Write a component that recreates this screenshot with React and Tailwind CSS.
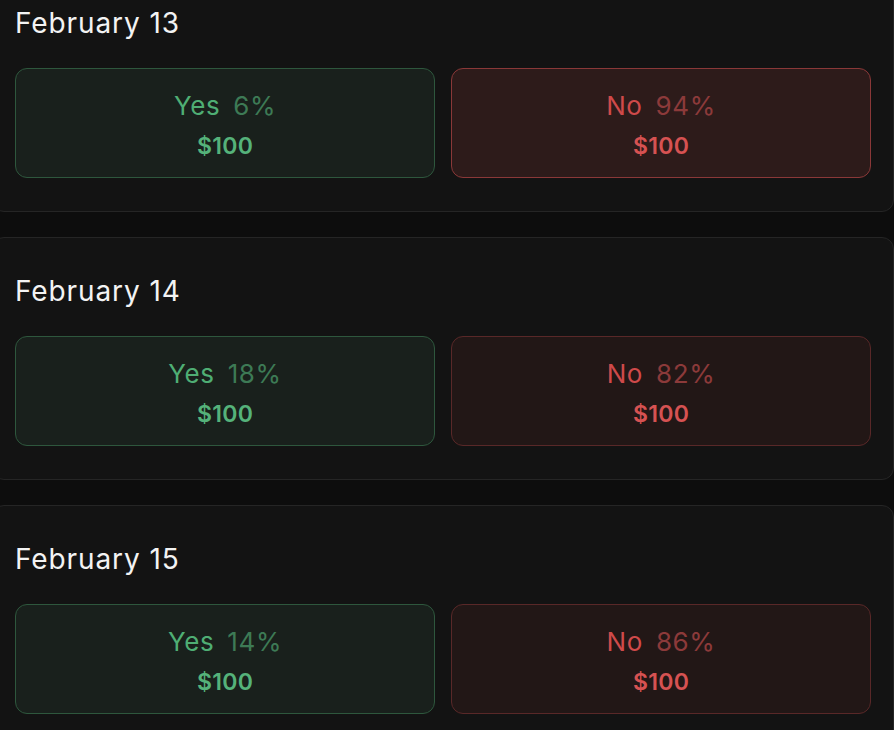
import React from "react";

const days = [
  { date: "February 13", yes: 6, no: 94, active: true },
  { date: "February 14", yes: 18, no: 82 },
  { date: "February 15", yes: 14, no: 86 },
];

const OutcomeButton = ({ side, pct, active }) => {
  const isYes = side === "yes";
  const box = isYes
    ? "bg-[#19201c] border-[#2e573d]"
    : active
    ? "bg-[#2d1b1a] border-[#8a3838]"
    : "bg-[#221716] border-[#592828]";
  return (
    <button
      className={`h-[110px] rounded-xl border flex flex-col items-center justify-center gap-[10px] pt-[4px] ${box}`}
    >
      <div className="flex items-baseline gap-[13px] text-[26px] leading-[32px] tracking-[0.6px]">
        <span className={isYes ? "text-[#4fae74]" : "text-[#cf4a4a]"}>
          {isYes ? "Yes" : "No"}
        </span>
        <span className={isYes ? "text-[#3d7a55]" : "text-[#8c3a3a]"}>
          {pct}%
        </span>
      </div>
      <div
        className={`text-[23px] leading-[28px] font-semibold tracking-[0.3px] ${
          isYes ? "text-[#55b27a]" : "text-[#d65252]"
        }`}
      >
        $100
      </div>
    </button>
  );
};

const DayCard = ({ day }) => {
  return (
    <div className="rounded-xl border border-[#252525] bg-[#131313] px-[22px] pt-[37px] pb-[33px]">
      <h2 className="text-[28px] leading-[32px] tracking-[0.9px] text-[#f3f3f3]">
        {day.date}
      </h2>
      <div className="grid grid-cols-2 gap-4 mt-[29px]">
        <OutcomeButton side="yes" pct={day.yes} />
        <OutcomeButton side="no" pct={day.no} active={day.active} />
      </div>
    </div>
  );
};

export default function App() {
  return (
    <div
      className="h-screen bg-[#0d0d0d] overflow-hidden"
      style={{ fontFamily: "Inter, 'Noto Sans', sans-serif" }}
    >
      <div className="flex flex-col gap-[25px] -mt-[31px] -ml-[8px] w-[902px]">
        {days.map((d) => (
          <DayCard key={d.date} day={d} />
        ))}
      </div>
    </div>
  );
}
